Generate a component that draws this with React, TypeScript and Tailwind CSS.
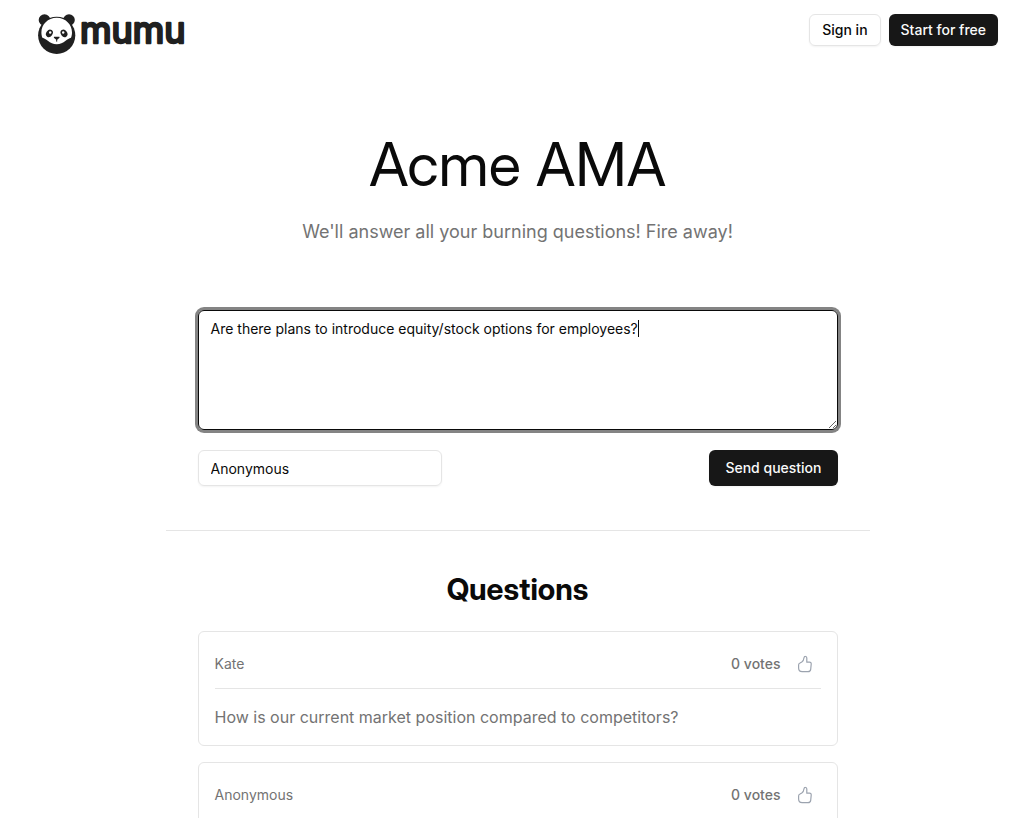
import { useState } from "react";
import type { FocusEvent } from "react";

type Question = {
  id: number;
  author: string;
  votes: number;
  body: string;
};

const questions: Question[] = [
  { id: 1, author: "Kate", votes: 0, body: "How is our current market position compared to competitors?" },
  { id: 2, author: "Anonymous", votes: 0, body: "" },
];

function PandaIcon() {
  return (
    <svg viewBox="0 0 38 40" className="h-10 w-[38px]" aria-hidden="true">
      <circle cx="6.5" cy="6" r="5.8" fill="#202020" />
      <circle cx="31" cy="6" r="5.8" fill="#202020" />
      <circle cx="18.7" cy="21.3" r="18.6" fill="#202020" />
      <path
        d="M18.7 3.8c8.900 0 15.300 6.800 15.300 14.700 0 2-.4 3.900-1 5.300-1.800.6-3.600 1.500-5.400 3-2.700 2.200-5.300 3.400-8.900 3.400s-6.200-1.200-8.900-3.400c-1.800-1.500-3.600-2.400-5.400-3-.6-1.400-1-3.300-1-5.300 0-7.900 6.400-14.700 15.300-14.700z"
        fill="#fff"
      />
      <ellipse cx="11.400" cy="19.400" rx="3.100" ry="4" transform="rotate(35 11.400 19.400)" fill="#202020" />
      <ellipse cx="26" cy="19.400" rx="3.100" ry="4" transform="rotate(-35 26 19.400)" fill="#202020" />
      <circle cx="12.200" cy="18.500" r="1.200" fill="#fff" />
      <circle cx="25.200" cy="18.500" r="1.200" fill="#fff" />
      <path d="M16.400 22.800h4.600c.6 0 .8.7.3 1.100l-1.900 1.600c-.4.3-1 .3-1.400 0l-1.900-1.600c-.5-.4-.3-1.100.3-1.100z" fill="#202020" />
      <path d="M18.700 25v2.600" stroke="#202020" strokeWidth="1" />
    </svg>
  );
}

function Wordmark() {
  return (
    <svg viewBox="0 0 108 40" className="h-10 w-[108px] overflow-visible" aria-hidden="true">
      <text
        x="0"
        y="29"
        fill="#202020"
        stroke="#202020"
        strokeWidth="2.5"
        strokeLinejoin="round"
        className="text-[36px] font-normal"
      >
        mumu
      </text>
    </svg>
  );
}

function ThumbIcon() {
  return (
    <svg viewBox="0 0 16 18" className="h-[18px] w-4" fill="none" stroke="#9ca3af" strokeWidth="1.2" strokeLinejoin="round" aria-hidden="true">
      <path d="M9.800 7.200V3c0-2-2.600-2-2.800-.2-.2 2-1 3.400-2.200 4.200L3 8c-1 .4-1.400 1-1.400 2v3c0 2.500 1.300 3.600 3.500 3.600h6c1.600 0 2.400-.8 2.600-2.300l.5-5.100c.1-1.300-.5-2-1.700-2z" />
    </svg>
  );
}

function QuestionCard({ question }: { question: Question }) {
  return (
    <article className="rounded-md border border-neutral-200 p-4">
      <div className="flex items-center justify-between border-b border-neutral-200 pb-2">
        <span className="text-sm text-neutral-500">{question.author}</span>
        <div className="flex items-center">
          <span className="text-sm font-medium text-neutral-500">{question.votes} votes</span>
          <button type="button" aria-label="Upvote" className="ml-2 flex h-8 w-8 items-center justify-center rounded-md hover:bg-neutral-100">
            <ThumbIcon />
          </button>
        </div>
      </div>
      {question.body && <p className="pt-4 text-base text-neutral-500">{question.body}</p>}
    </article>
  );
}

export default function App() {
  const [body, setBody] = useState("Are there plans to introduce equity/stock options for employees?");
  const [name, setName] = useState("Anonymous");

  const moveCaretToEnd = (e: FocusEvent<HTMLTextAreaElement>) => {
    const end = e.target.value.length;
    e.target.setSelectionRange(end, end);
  };

  return (
    <div className="min-h-screen bg-white font-['Inter',sans-serif] text-neutral-950">
      <header className="flex items-start justify-between px-9 pt-3.5">
        <a href="#" aria-label="mumu" className="flex h-10 items-center gap-1 pl-0.5">
          <PandaIcon />
          <Wordmark />
        </a>
        <nav className="flex gap-2">
          <button type="button" className="h-8 rounded-md border border-neutral-200 px-3 text-sm font-medium shadow-xs">
            Sign in
          </button>
          <button type="button" className="h-8 rounded-md bg-neutral-900 px-3 text-sm font-medium text-neutral-50 shadow-xs">
            Start for free
          </button>
        </nav>
      </header>

      <div className="pl-px">
        <main className="mx-auto max-w-[704px] pt-20">
          <div className="text-center">
            <h1 className="text-6xl leading-[60px] font-['Inter_Display','Inter',sans-serif]">Acme AMA</h1>
            <p className="mt-6 text-lg text-neutral-500">We'll answer all your burning questions! Fire away!</p>
          </div>

          <form className="px-8 pt-16 pb-11" onSubmit={(e) => e.preventDefault()}>
            <div className="relative">
              <textarea
                autoFocus
                aria-label="Your question"
                value={body}
                onChange={(e) => setBody(e.target.value)}
                onFocus={moveCaretToEnd}
                className="block h-[120px] w-full rounded-md border border-neutral-950 px-3 py-2 text-sm caret-transparent ring-3 ring-neutral-950/50 outline-none"
              />
              <span className="pointer-events-none absolute top-2.5 left-[440px] h-[17px] w-px bg-neutral-950" />
            </div>
            <div className="mt-5 flex items-center justify-between">
              <input
                aria-label="Your name"
                value={name}
                onChange={(e) => setName(e.target.value)}
                className="h-9 w-[244px] rounded-md border border-neutral-200 px-3 text-sm shadow-xs outline-none"
              />
              <button type="submit" className="h-9 rounded-md bg-neutral-900 px-4 text-sm font-medium text-neutral-50 shadow-xs">
                Send question
              </button>
            </div>
          </form>

          <section className="border-t border-neutral-200 px-8 pt-10">
            <h2 className="text-center text-3xl font-bold font-['Inter_Display','Inter',sans-serif]">Questions</h2>
            <div className="mt-6 flex flex-col gap-4">
              {questions.map((q) => (
                <QuestionCard key={q.id} question={q} />
              ))}
            </div>
          </section>
        </main>
      </div>
    </div>
  );
}
